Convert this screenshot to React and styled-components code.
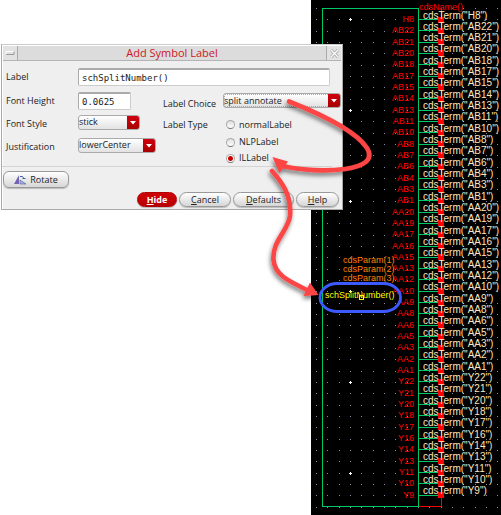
import React from "react";
import styled, { createGlobalStyle, css } from "styled-components";

const PINS = (
  "H8 AB22 AB21 AB20 AB18 AB17 AB15 AB14 AB13 AB11 AB10 AB8 AB7 AB6 AB4 AB3 AB1 " +
  "AA20 AA19 AA17 AA16 AA15 AA13 AA12 AA10 AA9 AA8 AA6 AA5 AA3 AA2 AA1 " +
  "Y22 Y21 Y20 Y18 Y17 Y16 Y14 Y13 Y11 Y10 Y9"
).split(" ");

const GlobalStyle = createGlobalStyle`
  * { box-sizing: border-box; }
  body { margin: 0; background: #fff; }
`;

const Workspace = styled.main`
  position: relative;
  display: grid;
  grid-template-columns: 311px 1fr;
  min-height: 100vh;
  overflow: hidden;
  font-family: "Open Sans", "Noto Sans", sans-serif;
`;

/* ---------- schematic canvas ---------- */

const Canvas = styled.section`
  grid-column: 2;
  position: relative;
  display: flex;
  padding: 8px 0 8px 11px;
  background: #000;
  overflow: hidden;
  font: 10px/11px "Liberation Sans", Arial, sans-serif;
`;

const GridDots = styled.svg`
  position: absolute;
  inset: 0;
  width: 100%;
  height: 100%;
`;

const Symbol = styled.div`
  position: relative;
  flex: 1;
  display: grid;
  grid-template-columns: 97px 23px 1fr;
`;

const Body = styled.div`
  grid-area: 1 / 1;
  border: 1px solid #00c864;
`;

const PinEdge = styled.div`
  grid-area: 1 / 2;
  border: solid #ff0000;
  border-width: 0 1px 1px 0;
`;

const PinList = styled.ul`
  grid-area: 1 / 1 / 2 / 4;
  display: grid;
  grid-auto-rows: 1fr;
  margin: 0;
  padding: 6px 0;
  list-style: none;
`;

const Pin = styled.li`
  display: grid;
  grid-template-columns: 97px 25px 1fr;
  grid-template-rows: 11px;
  align-items: center;
  height: 11px;
`;

const PinName = styled.span`
  padding-right: 5px;
  color: #ff0000;
  font-size: 9px;
  text-align: right;
`;

const Stub = styled.span`
  grid-area: 1 / 2;
  display: flex;
  align-items: center;
  justify-content: flex-end;
  background: linear-gradient(#00c864, #00c864) center / 100% 1px no-repeat;

  &::after {
    content: "";
    width: 6px;
    height: 6px;
    background: #ff0000;
  }
`;

const Term = styled.span`
  grid-area: 1 / 2 / 2 / 4;
  padding: 0 0 9px 4px;
  color: #ffe6bf;
  white-space: nowrap;
  z-index: 1;
`;

const Note = styled.div`
  position: absolute;
  white-space: nowrap;
  font-size: 9px;
`;

const NameNote = styled(Note)`
  left: 108px;
  top: 2px;
  color: #ff0000;
`;

const ParamNote = styled(Note)`
  left: 32px;
  top: 256px;
  color: #ff7f00;
  line-height: 9px;
`;

const SplitNote = styled(Note)`
  left: 14px;
  top: 290px;
  color: #ffff00;
`;

const Origin = styled.span`
  position: absolute;
  left: 48px;
  top: 295px;
  width: 5px;
  height: 5px;
  border: 1px solid #ffff00;
`;

/* ---------- dialog ---------- */

const Dialog = styled.form`
  position: absolute;
  left: 1px;
  top: 44px;
  width: 342px;
  background: #efefef;
  border: 1px solid #aaa;
  border-top-color: #ccc;
  box-shadow: inset 1px 1px 0 #fff;
  color: #222;
  font-size: 9px;
  line-height: 14px;
`;

const TitleBar = styled.header`
  display: grid;
  grid-template-columns: 14px 1fr 14px;
  height: 15px;
  margin: 1px 1px 7px;
  background: #dcdcdc;
  border-bottom: 1px solid #b4b4b4;
`;

const Title = styled.h1`
  margin: 0;
  color: #cc1626;
  font-size: 11px;
  font-weight: 500;
  line-height: 13px;
  text-align: center;
  border: solid #aaa;
  border-width: 0 1px;
`;

const TitleButton = styled.button`
  display: grid;
  place-items: center;
  padding: 0;
  border: 0;
  background: #e2e2e2;
`;

const LabelRow = styled.div`
  display: grid;
  grid-template-columns: 72px 1fr;
  align-items: center;
  padding: 0 12px 0 4px;
`;

const Columns = styled.div`
  display: grid;
  grid-template-columns: 157px 1fr;
  margin-top: 5px;
  padding-left: 4px;
`;

const Fields = styled.div`
  display: grid;
  grid-template-columns: 72px 1fr;
  grid-template-rows: 20px 22px 24px;
  align-items: center;
  justify-items: start;
`;

const LowLabel = styled.label`
  padding-top: 4px;
`;

const Choices = styled.div`
  display: grid;
  grid-template-columns: 60px 1fr;
  grid-template-rows: 22px 19px 16px 16px;
  align-items: center;
  padding-top: 2px;
`;

const TextInput = styled.input`
  width: ${(p) => p.$width};
  height: 18px;
  min-width: 0;
  padding: 0 3px;
  border: 1px solid #ccc;
  border-top: 2px solid #aaa;
  border-left-color: #aaa;
  border-radius: 2px;
  background: #fff;
  color: #222;
  font: 9px "DejaVu Sans Mono", monospace;
  outline: none;
`;

const SelectBox = styled.span`
  position: relative;
  display: grid;
  align-self: ${(p) => (p.$top ? "start" : "center")};
  width: ${(p) => p.$width};
  height: 15px;
  border: 1px solid #aaa;
  border-radius: 3px;
  overflow: hidden;
  background: linear-gradient(#fff, #e2e2e2);
  grid-template-columns: 1fr 12px;
`;

const Select = styled.select`
  grid-area: 1 / 1 / 2 / 3;
  appearance: none;
  width: 100%;
  padding: 0;
  border: 0;
  background: transparent;
  color: #222;
  font: inherit;
  font-size: 9px;
  line-height: 12px;
  outline: none;
  ${(p) =>
    p.$focused &&
    css`
      outline: 1px dotted #aaa;
      outline-offset: -1px;
    `}
`;

const SelectArrow = styled.svg`
  grid-area: 1 / 2;
  width: 12px;
  height: 13px;
  background: linear-gradient(#d00010, #a80000);
  pointer-events: none;
  z-index: 1;
`;

const RadioLabel = styled.label`
  grid-column: 2;
  display: flex;
  align-items: center;
  gap: 4px;
  padding-left: 3px;
`;

const Radio = styled.input`
  appearance: none;
  width: 9px;
  height: 9px;
  margin: 0;
  border: 1px solid #aaa;
  border-bottom-color: #777;
  border-radius: 50%;
  background: linear-gradient(#ddd, #fff);

  &:checked {
    background: radial-gradient(circle, #cc0000 0 2px, #fff 3px);
  }
`;

const Divider = styled.hr`
  margin: 0 10px 4px 0;
  border: 0;
  border-top: 1px solid #d4d4d4;
`;

const Button = styled.button`
  display: inline-flex;
  align-items: center;
  justify-content: center;
  gap: 4px;
  width: ${(p) => p.$width};
  height: ${(p) => (p.$tall ? "17px" : "15px")};
  padding: 0;
  border: 1px solid #999;
  border-radius: ${(p) => (p.$tall ? "6px" : "8px")};
  background: linear-gradient(#fff, #d6d6d6);
  box-shadow: 0 1px 1px #bbb;
  color: #222;
  font: inherit;
  line-height: 12px;
  ${(p) =>
    p.$primary &&
    css`
      border-color: #b00000;
      background: linear-gradient(#cf0008, #b90000);
      color: #fff;
      font-weight: 700;
    `}
`;

const Tools = styled.div`
  display: flex;
  padding-left: 1px;
`;

const Actions = styled.footer`
  display: flex;
  justify-content: flex-end;
  gap: 2px;
  padding: 4px 3px 2px 0;
`;

const Markup = styled.svg`
  position: absolute;
  left: 0;
  top: 0;
  pointer-events: none;
`;

function Dropdown({ id, value, width, focused, top }) {
  return (
    <SelectBox $width={width} $top={top}>
      <Select id={id} $focused={focused} defaultValue={value}>
        <option>{value}</option>
      </Select>
      <SelectArrow viewBox="0 0 12 13" aria-hidden="true">
        <path d="M3 5h6L6 8.5z" fill="#fff" />
      </SelectArrow>
    </SelectBox>
  );
}

function Schematic() {
  const pitch = 34 / 3;
  const dots = [];
  for (let row = 0; row < 45; row++) {
    for (let col = 0; col < 17; col++) {
      const x = Math.round(5 + col * pitch);
      const y = Math.round(8 + row * pitch);
      if (row % 8 === 1 && col % 8 === 3) {
        dots.push(<path key={`${row}-${col}`} d={`M${x - 1} ${y}h3v1h-3zM${x} ${y - 1}h1v3h-1z`} fill="#fff" />);
      } else {
        dots.push(<rect key={`${row}-${col}`} x={x} y={y} width="1" height="1" fill="#8888aa" />);
      }
    }
  }
  return (
    <Canvas aria-label="Symbol schematic">
      <GridDots shapeRendering="crispEdges" aria-hidden="true">{dots}</GridDots>
      <Symbol>
        <Body />
        <PinEdge />
        <PinList>
          {PINS.map((pin) => (
            <Pin key={pin}>
              <PinName>{pin}</PinName>
              <Stub />
              <Term>{`cdsTerm("${pin}")`}</Term>
            </Pin>
          ))}
        </PinList>
      </Symbol>
      <NameNote>cdsName()</NameNote>
      <ParamNote>
        cdsParam(1)<br />cdsParam(2)<br />cdsParam(3)
      </ParamNote>
      <SplitNote>schSplitNumber()</SplitNote>
      <Origin />
    </Canvas>
  );
}

function AddSymbolLabel() {
  return (
    <Dialog onSubmit={(e) => e.preventDefault()}>
      <TitleBar>
        <TitleButton type="button" aria-label="Window menu">
          <svg width="10" height="6"><path d="M1 4.5V1.500h8" stroke="#fff" fill="none" /><path d="M1 4.500h8v-3" stroke="#999" fill="none" /></svg>
        </TitleButton>
        <Title>Add Symbol Label</Title>
        <TitleButton type="button" aria-label="Close">
          <svg width="9" height="9"><path d="M1 1l7 7M8 1L1 8" stroke="#aaa" strokeWidth="3" /><path d="M1 1l7 7M8 1L1 8" stroke="#fff" strokeWidth="1.200" /></svg>
        </TitleButton>
      </TitleBar>
      <LabelRow>
        <label htmlFor="label">Label</label>
        <TextInput id="label" $width="100%" defaultValue="schSplitNumber()" />
      </LabelRow>
      <Columns>
        <Fields>
          <label htmlFor="height">Font Height</label>
          <TextInput id="height" $width="53px" defaultValue="0.0625" />
          <LowLabel htmlFor="style">Font Style</LowLabel>
          <Dropdown id="style" value="stick" width="62px" />
          <LowLabel htmlFor="just">Justification</LowLabel>
          <Dropdown id="just" value="lowerCenter" width="78px" />
        </Fields>
        <Choices role="radiogroup" aria-labelledby="type">
          <label htmlFor="choice">Label Choice</label>
          <Dropdown id="choice" value="split annotate" width="118px" focused top />
          <span id="type">Label Type</span>
          <RadioLabel><Radio type="radio" name="type" />normalLabel</RadioLabel>
          <RadioLabel><Radio type="radio" name="type" />NLPLabel</RadioLabel>
          <RadioLabel><Radio type="radio" name="type" defaultChecked />ILLabel</RadioLabel>
        </Choices>
      </Columns>
      <Divider />
      <Tools>
        <Button type="button" $width="66px" $tall>
          <svg width="12" height="10" viewBox="0 0 12 10" aria-hidden="true">
            <path d="M0 9L5 0v9z" fill="#7562b4" />
            <path d="M6 9h6L6 5z" fill="#a9b5dc" stroke="#4a5aa0" strokeWidth=".6" />
            <path d="M6 1.500q3-1 4 2M8.500 3.500h3" fill="none" stroke="#3465a4" />
          </svg>
          Rotate
        </Button>
      </Tools>
      <Actions>
        <Button $width="40px" $primary><span><u>H</u>ide</span></Button>
        <Button type="button" $width="52px"><span><u>C</u>ancel</span></Button>
        <Button type="button" $width="61px"><span><u>D</u>efaults</span></Button>
        <Button type="button" $width="43px"><span><u>H</u>elp</span></Button>
      </Actions>
    </Dialog>
  );
}

export default function App() {
  return (
    <Workspace>
      <GlobalStyle />
      <Schematic />
      <AddSymbolLabel />
      <Markup width="501" height="515" viewBox="0 0 501 515" aria-hidden="true">
        <defs>
          <filter id="shade" x="-20%" y="-20%" width="140%" height="140%">
            <feDropShadow dx="-1" dy="3" stdDeviation="2" floodColor="#000" floodOpacity=".5" />
          </filter>
        </defs>
        <rect x="320" y="283.500" width="80.500" height="28" rx="17" ry="14" fill="none" stroke="#3d5afe" strokeWidth="2.800" />
        <g filter="url(#shade)" fill="none" stroke="#fc4444" strokeLinecap="round">
          <path d="M289 101.500C318 113 356 131 367 148C382 172 322 174 282 166" strokeWidth="4.600" />
          <path d="M272.500 157L288 161.500L279.500 173z" fill="#fc4444" stroke="none" />
          <path d="M272 171C281 181 292 195 290 216C288 231 272 241 273.500 260C275 276 291 282 307 290" strokeWidth="4.600" />
          <path d="M318.500 295L310 282.500L303.500 296z" fill="#fc4444" stroke="none" />
        </g>
      </Markup>
    </Workspace>
  );
}
